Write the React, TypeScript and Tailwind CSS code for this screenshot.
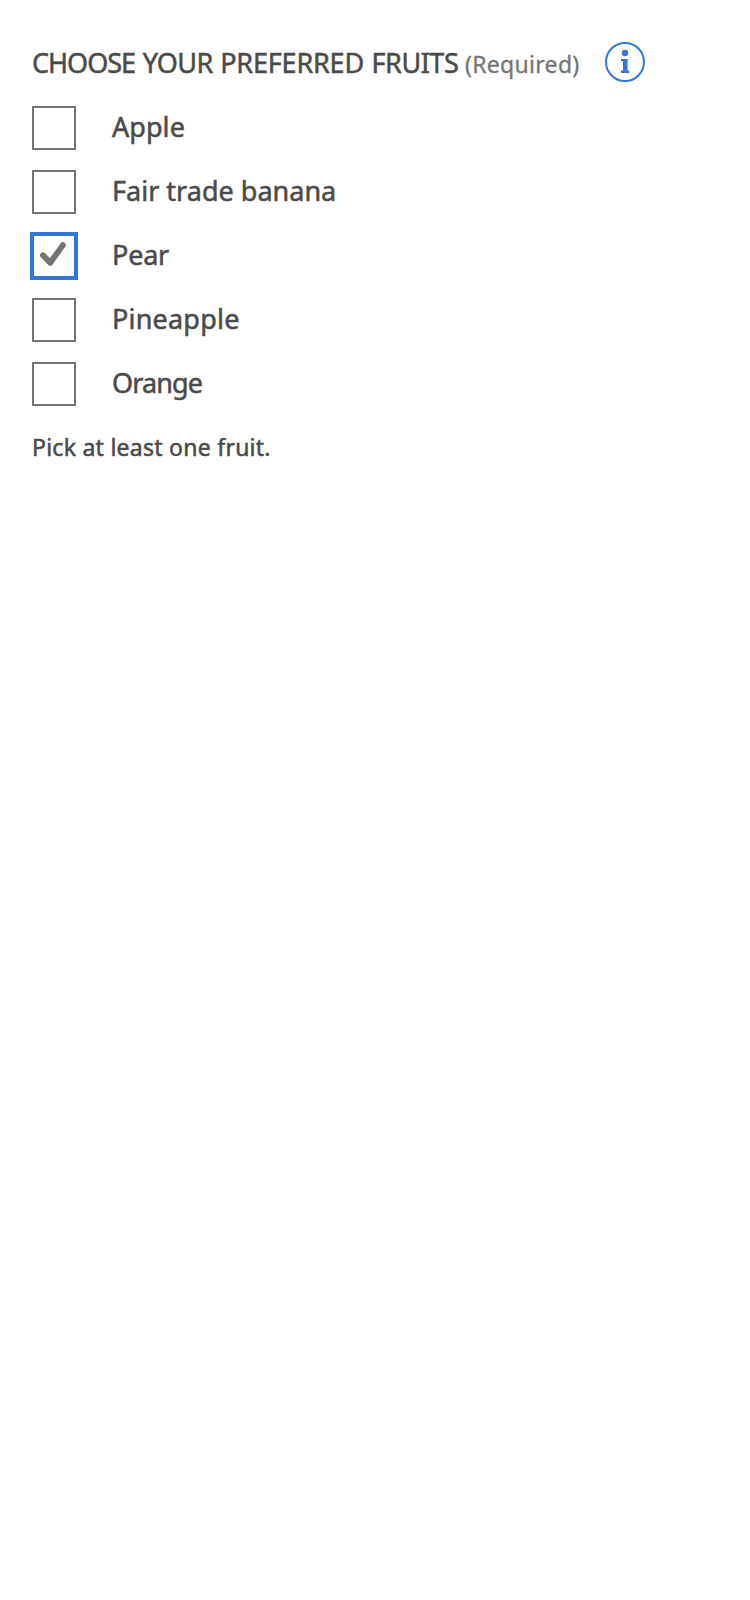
import { useState } from "react";

const fruits = [
  { name: "Apple", tracking: "tracking-[0.05px]" },
  { name: "Fair trade banana", tracking: "tracking-[0.01px]" },
  { name: "Pear", tracking: "tracking-[-0.2px]" },
  { name: "Pineapple", tracking: "tracking-[0.2px]" },
  { name: "Orange", tracking: "tracking-[-0.9px]" },
];

function InfoIcon() {
  return (
    <svg width="40" height="40" viewBox="0 0 40 40" aria-hidden="true">
      <circle cx="20" cy="20" r="19" fill="none" stroke="#3575d8" strokeWidth="2" />
      <circle cx="20" cy="11" r="3.2" fill="#3575d8" />
      <path d="M16 17h6.600v11.500H24.200V31H16v-2.500h2V19.300h-2z" fill="#3575d8" />
    </svg>
  );
}

function CheckIcon() {
  return (
    <svg width="26" height="24" viewBox="0 0 26 24" aria-hidden="true">
      <path
        d="M3 13.300L10.200 20.800L22.900 3.100"
        fill="none"
        stroke="#737373"
        strokeWidth="5.800"
        strokeLinecap="round"
        strokeLinejoin="round"
      />
    </svg>
  );
}

export default function App() {
  const [selected, setSelected] = useState<string[]>(["Pear"]);

  const toggle = (name: string) =>
    setSelected((current) =>
      current.includes(name)
        ? current.filter((item) => item !== name)
        : [...current, name],
    );

  return (
    <main className="min-h-[1600px] bg-white px-8 pt-[42px] font-['Noto_Sans',sans-serif] text-[#4a4a4a] [-webkit-text-stroke:0.5px]">
      <div className="flex h-10 items-start whitespace-nowrap">
        <div className="flex w-[573px] shrink-0 items-baseline leading-[42px]">
          <h1 className="w-[433px] shrink-0 text-[27px] font-normal tracking-[-0.45px] [word-spacing:1px]">
            <span className="tracking-[-1px]">CHOOSE</span>{" "}
            <span className="tracking-[-0.6px]">YOUR</span>{" "}
            <span className="tracking-[-0.2px]">PREFERRED</span> FRUITS
          </h1>
          <span className="text-[23px] tracking-[0.3px] text-[#757575] [-webkit-text-stroke:0.3px]">
            (Required)
          </span>
        </div>
        <InfoIcon />
      </div>
      <ul className="mt-6 flex flex-col gap-5">
        {fruits.map(({ name, tracking }) => {
          const checked = selected.includes(name);
          return (
            <li key={name}>
              <button
                type="button"
                role="checkbox"
                aria-checked={checked}
                onClick={() => toggle(name)}
                className="flex h-11 items-start gap-9 text-left"
              >
                <span
                  className={
                    checked
                      ? "-m-0.5 flex size-12 shrink-0 justify-center border-4 border-[#3575d8] pt-1.5 pr-0.5"
                      : "size-11 shrink-0 border-2 border-[#757575]"
                  }
                >
                  {checked && <CheckIcon />}
                </span>
                <span className={`text-[27px] leading-[42px] ${tracking}`}>{name}</span>
              </button>
            </li>
          );
        })}
      </ul>
      <p className="mt-[21px] text-[23px] leading-10 tracking-[0.26px]">Pick at least one fruit.</p>
    </main>
  );
}
